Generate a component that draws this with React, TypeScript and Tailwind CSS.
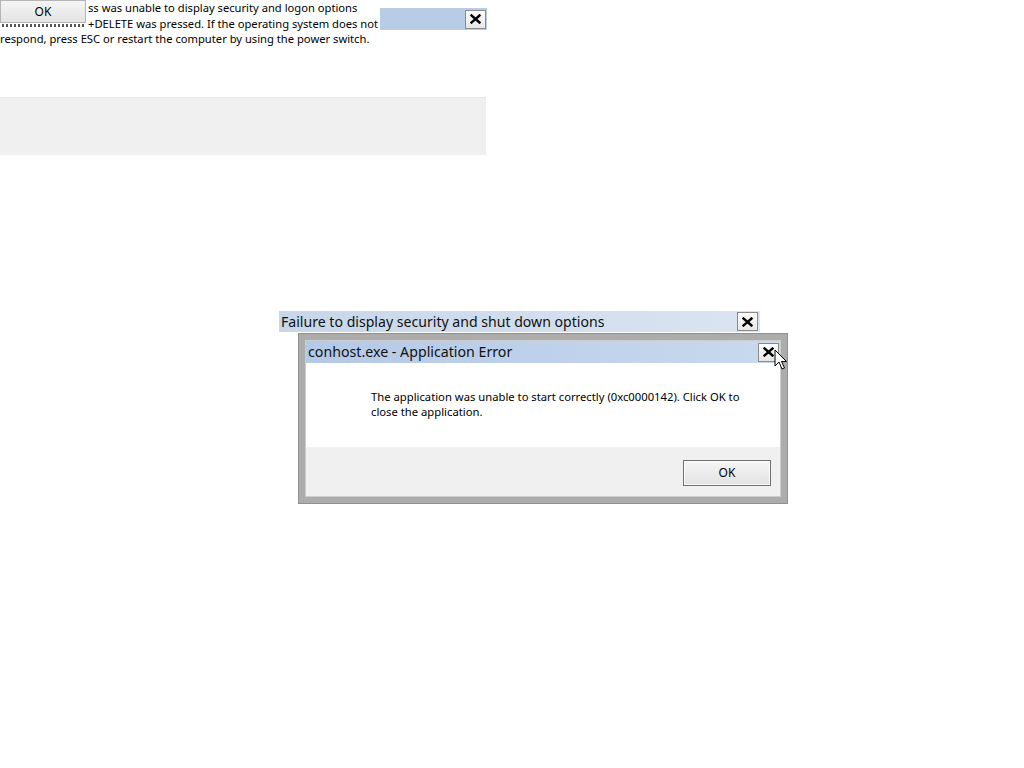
import React from 'react';

const font = { fontFamily: '"Noto Sans", "Open Sans", Arial, sans-serif' };

function CloseBox({ className = '' }: { className?: string }) {
  return (
    <div
      className={`flex items-center justify-center w-[21px] h-[19px] border border-[#8a8a8a] bg-gradient-to-b from-white to-[#e6e6e6] ${className}`}
    >
      <svg width="11" height="10" viewBox="0 0 11 10">
        <path d="M1.5 1.5 L9.5 8.5 M9.5 1.5 L1.5 8.5" stroke="#000" strokeWidth="2.4" strokeLinecap="square" />
      </svg>
    </div>
  );
}

function Cursor() {
  return (
    <svg width="14" height="22" viewBox="0 0 14 22" className="absolute left-[774px] top-[349px]">
      <path
        d="M1 1 L1 17 L5 13 L8 20 L10.5 19 L7.5 12.5 L12.5 12.5 Z"
        fill="#fff"
        stroke="#000"
        strokeWidth="1"
        strokeLinejoin="round"
      />
    </svg>
  );
}

export default function App() {
  return (
    <div className="relative w-[1024px] h-[768px] bg-white overflow-hidden text-black" style={font}>
      {/* leftover fragment of winlogon message */}
      <div className="absolute left-0 top-0 w-[500px] text-[11.2px] leading-[15.5px]">
        <div className="pl-[88px]">ss was unable to display security and logon options</div>
        <div className="relative pl-[88px]">
          <span className="absolute left-[2px] top-[8px] w-[82px] h-[3px] bg-[repeating-linear-gradient(90deg,#555_0_2px,transparent_2px_4px)]" />
          +DELETE was pressed. If the operating system does not
        </div>
        <div>respond, press ESC or restart the computer by using the power switch.</div>
      </div>
      <div className="absolute left-0 top-0 w-[86px] h-[23px] border border-[#b5b5b5] bg-gradient-to-b from-[#f5f5f5] to-[#e4e4e4] flex items-center justify-center text-[12px]">
        OK
      </div>
      <div className="absolute left-[380px] top-[8px] w-[107px] h-[22px] bg-[#b9cce6] flex items-center justify-end pr-[1px]">
        <CloseBox />
      </div>
      <div className="absolute left-0 top-[97px] w-[486px] h-[58px] bg-[#f0f0f0] border-t border-[#e6e6e6]" />

      {/* first dialog title */}
      <div className="absolute left-[279px] top-[311px] w-[481px] h-[21px] bg-gradient-to-r from-[#c7d6e9] to-[#dbe5f1] flex items-center justify-between pl-[2px] pr-[2px]">
        <span className="text-[14.1px] text-[#111]">Failure to display security and shut down options</span>
        <CloseBox />
      </div>

      {/* application error dialog */}
      <div className="absolute left-[298px] top-[333px] w-[490px] h-[171px] bg-[#acacac] border border-[#919191] p-[6px] flex">
        <div className="flex-1 flex flex-col border border-[#cdcdcd] bg-white">
          <div className="h-[22px] bg-gradient-to-r from-[#b4c9e6] to-[#c9d9ee] flex items-center justify-between pl-[2px] pr-[1px]">
            <span className="text-[14.2px] text-[#111]">conhost.exe - Application Error</span>
            <CloseBox />
          </div>
          <div className="h-[84px] bg-white pl-[65px] pt-[26px] text-[11.25px] leading-[15px]">
            <div>The application was unable to start correctly (0xc0000142). Click OK to</div>
            <div>close the application.</div>
          </div>
          <div className="flex-1 bg-[#f0f0f0] flex items-start justify-end pr-[9px] pt-[13px]">
            <div className="w-[88px] h-[26px] border border-[#707070] bg-gradient-to-b from-[#f6f6f6] to-[#e2e2e2] flex items-center justify-center text-[12px] shadow-[inset_0_0_0_1px_#fcfcfc]">
              OK
            </div>
          </div>
        </div>
      </div>
      <Cursor />
    </div>
  );
}
